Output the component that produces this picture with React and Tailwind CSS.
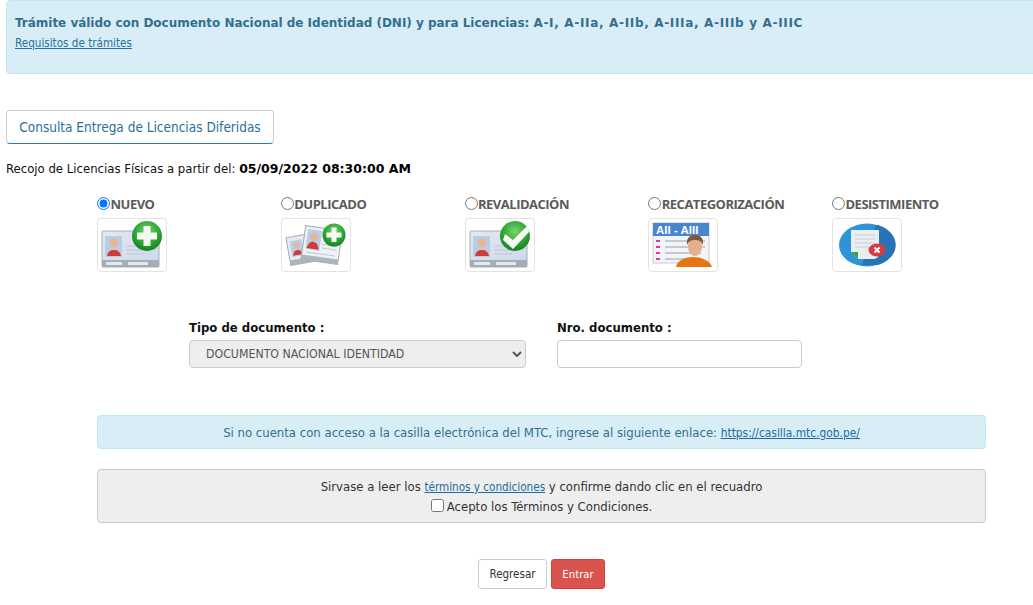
const tahoma = "font-['DejaVu_Sans_Condensed','Noto_Sans',sans-serif]";

function Defs() {
  return (
    <defs>
      <radialGradient id="greenBall" cx="50%" cy="35%" r="70%">
        <stop offset="0%" stopColor="#7ed36f" />
        <stop offset="55%" stopColor="#2fa836" />
        <stop offset="100%" stopColor="#0d7a1f" />
      </radialGradient>
      <linearGradient id="cardFace" x1="0" y1="0" x2="1" y2="1">
        <stop offset="0%" stopColor="#e4e9ef" />
        <stop offset="100%" stopColor="#c9d8ec" />
      </linearGradient>
    </defs>
  );
}

function CardBase() {
  return (
    <>
      <Defs />
      <rect x="5" y="13" width="57" height="36" rx="1" fill="url(#cardFace)" stroke="#a9afb6" />
      <rect x="8" y="18" width="17" height="21" fill="#b9cde6" />
      <circle cx="17" cy="25" r="4.500" fill="#e5b59a" />
      <path d="M10 38c1-5 4-6 7-6s6 1 7 6z" fill="#d23a36" />
      <path d="M29 28h20M29 32h24M29 36h18" stroke="#bcc6d2" strokeWidth="1" />
      <path d="M5 42h57v7H5z" fill="#a4acb5" />
      <path d="M9 44h16v3H9zM31 44h20v3H31z" fill="#e6e9ec" />
    </>
  );
}

const iconCls = "w-[68px] h-[52px]";

function Nuevo() {
  return (
    <svg viewBox="1 1 68 52" className={iconCls}>
      <CardBase />
      <circle cx="50" cy="18" r="15" fill="url(#greenBall)" />
      <path d="M46.500 8h7v6.500H60v7h-6.500V28h-7v-6.500H40v-7h6.500z" fill="#f4f9f2" />
    </svg>
  );
}

function Duplicado() {
  return (
    <svg viewBox="1 1 68 52" className={iconCls}>
      <Defs />
      <g transform="rotate(-10 22 30)">
        <rect x="7" y="17" width="28" height="28" fill="#e8ecf1" stroke="#a5abb2" />
        <rect x="10" y="21" width="12" height="16" fill="#b9cde6" />
        <circle cx="16" cy="26" r="3" fill="#e5b59a" />
        <path d="M11 36c1-4 3-5 5-5s4 1 5 5z" fill="#d23a36" />
        <path d="M7 40h28v5H7z" fill="#aeb5bd" />
      </g>
      <g transform="rotate(8 40 28)">
        <rect x="22" y="10" width="37" height="34" fill="#eef2f7" stroke="#a5abb2" />
        <rect x="25" y="13" width="14" height="20" fill="#b9cde6" />
        <circle cx="32" cy="20" r="4" fill="#e5b59a" />
        <path d="M26 32c1-5 3-7 6-7s5 2 6 7z" fill="#d23a36" />
        <path d="M41 26h14M41 30h15M26 36h29" stroke="#bcc6d2" />
        <path d="M22 39h37v5H22z" fill="#aeb5bd" />
      </g>
      <circle cx="53" cy="17" r="11.500" fill="url(#greenBall)" />
      <path d="M50.500 9.500h5V14.500H60.500v5H55.500v4.500h-5v-4.500H45.500v-5h5z" fill="#f4f9f2" />
    </svg>
  );
}

function Revalidacion() {
  return (
    <svg viewBox="1 1 68 52" className={iconCls}>
      <CardBase />
      <circle cx="50" cy="18" r="15" fill="url(#greenBall)" />
      <path d="M40 16l8 6 15-15 1 7-16 17-10-9z" fill="#f4f9f2" />
    </svg>
  );
}

function Recategorizacion() {
  return (
    <svg viewBox="1 1 68 52" className={iconCls}>
      <rect x="5" y="5" width="56" height="40" fill="#f2f4f8" stroke="#c5cbd4" />
      <rect x="5" y="5" width="56" height="13" fill="#4a86d0" />
      <text x="8" y="16" fontSize="11.500" fontWeight="700" fill="#ffffff" fontFamily="'Liberation Sans',sans-serif">AII - AIII</text>
      <path d="M8 23h4M8 29h4M8 35h4M8 41h4" stroke="#d93ab0" strokeWidth="2" />
      <path d="M17 23h40M17 29h40M17 35h36M17 41h26" stroke="#b5bcc6" strokeWidth="1.500" />
      <path d="M28 49c1-7 10-10 17-10s17 3 19 10z" fill="#e77412" />
      <ellipse cx="47" cy="29" rx="7" ry="9" fill="#e3b08c" />
      <path d="M39 27c-1-8 4-10 8-10s9 2 8 10c-2-4-4-5-8-5s-6 1-8 5z" fill="#7d5a3c" />
    </svg>
  );
}

function Desistimiento() {
  return (
    <svg viewBox="1 1 68 52" className={iconCls}>
      <ellipse cx="35" cy="27" rx="28" ry="21.500" fill="#2f93da" />
      <path d="M46 7a28 21.500 0 0 1 0 40H30L44 7z" fill="#2773b6" />
      <path d="M19 12h28v24a5 5 0 0 1-5 5H26l-7-7z" fill="#e9eef3" />
      <path d="M19 34h7v7z" fill="#37a24a" />
      <path d="M23 17h20M23 21h20M23 25h20M23 29h14" stroke="#c6ced6" />
      <ellipse cx="45" cy="32" rx="8.500" ry="6.500" fill="#d83a3e" />
      <path d="M42.500 29.500l5 5M47.500 29.500l-5 5" stroke="#fff" strokeWidth="2" />
    </svg>
  );
}

function Option({ label, Icon, checked }) {
  return (
    <div className="w-[183.75px] shrink-0">
      <label className="flex items-start h-[22px] text-[13px] leading-[17px] font-bold text-[#5a5a5a] font-['Open_Sans',sans-serif] tracking-[-0.5px]">
        <input type="radio" name="tipo" defaultChecked={checked} className="w-[13px] h-[13px] m-0 mt-[1px]" />
        <span className="ml-[0.5px]">{label}</span>
      </label>
      <div className="w-[70px] h-[54px] border border-[#e3e3e3] rounded-[4px] bg-white overflow-hidden">
        <Icon />
      </div>
    </div>
  );
}

export default function App() {
  return (
    <div className={`w-[1033px] h-[605px] overflow-hidden bg-white text-[12px] text-[#333] ${tahoma}`}>
      <div className="ml-[6px] w-[1040px] h-[74px] bg-[#d9edf7] border border-[#bce8f1] rounded-[4px] pl-[8px] pt-[14px]">
        <p className="text-[12px] leading-[16px] font-bold text-[#31708f] font-['DejaVu_Sans',sans-serif] tracking-[-0.02px] m-0">
          Trámite válido con Documento Nacional de Identidad (DNI) y para Licencias: <span className="tracking-[0.67px]">A-I, A-IIa, A-IIb, A-IIIa, A-IIIb y A-IIIC</span>
        </p>
        <a href="#" className="block mt-[4px] text-[11.600px] leading-[16px] text-[#23749f] underline w-fit">Requisitos de trámites</a>
      </div>

      <div className="mt-[36px] pl-[6px]">
        <button className="h-[34px] w-[268px] border border-[#ccc] border-b-[#2e7ca8] rounded-[4px] bg-white text-[13.500px] text-[#2a7099]">
          Consulta Entrega de Licencias Diferidas
        </button>
      </div>

      <p className="mt-[16px] ml-[6px] mb-0 text-[13px] leading-[18px] text-[#111]">
        Recojo de Licencias Físicas a partir del: <b className="font-['DejaVu_Sans',sans-serif] text-[12.500px] text-black">05/09/2022 08:30:00 AM</b>
      </p>

      <div className="flex ml-[97px] mt-[18px]">
        <Option label="NUEVO" Icon={Nuevo} checked />
        <Option label="DUPLICADO" Icon={Duplicado} />
        <Option label="REVALIDACIÓN" Icon={Revalidacion} />
        <Option label="RECATEGORIZACIÓN" Icon={Recategorizacion} />
        <Option label="DESISTIMIENTO" Icon={Desistimiento} />
      </div>

      <div className="flex ml-[189px] mt-[47px] gap-[31px]">
        <div className="w-[337px]">
          <div className="h-[21px] text-[13px] leading-[18px] font-bold text-[#111]">Tipo de documento :</div>
          <div className="relative h-[28px] bg-[#eee] border border-[#ccc] rounded-[4px] pl-[16px] text-[12.250px] leading-[26px] text-[#555]">
            DOCUMENTO NACIONAL IDENTIDAD
            <svg viewBox="0 0 10 6" className="absolute right-[3px] top-[10px] w-[10px] h-[6px]" fill="none" stroke="#555" strokeWidth="2">
              <path d="M1 1l4 4 4-4" />
            </svg>
          </div>
        </div>
        <div className="w-[245px]">
          <div className="h-[21px] text-[13px] leading-[18px] font-bold text-[#111]">Nro. documento :</div>
          <input className="block w-full h-[28px] bg-white border border-[#ccc] rounded-[4px]" />
        </div>
      </div>

      <div className="ml-[97px] w-[889px] mt-[47px] h-[34px] bg-[#d9edf7] border border-[#bce8f1] rounded-[4px] text-center text-[13px] leading-[33px] text-[#31708f]">
        Si no cuenta con acceso a la casilla electrónica del MTC, ingrese al siguiente enlace: <a href="#" className="text-[11.850px] text-[#1b6d9c] underline">https://casilla.mtc.gob.pe/</a>
      </div>

      <div className="ml-[97px] w-[889px] mt-[20px] h-[54px] bg-[#eee] border border-[#ccc] rounded-[4px] text-center pt-[7px] text-[13px] text-[#333] leading-[20px]">
        <div>Sirvase a leer los <a href="#" className="text-[11.600px] text-[#1b6d9c] underline">términos y condiciones</a> y confirme dando clic en el recuadro</div>
        <label className="flex items-center justify-center gap-[3px] text-[13px]">
          <input type="checkbox" className="w-[13px] h-[13px] m-0 -mt-[3px]" />
          <span>Acepto los Términos y Condiciones.</span>
        </label>
      </div>

      <div className="flex justify-center gap-[4px] mt-[36px] ml-[50px]">
        <button className="w-[69px] h-[30px] pt-[2px] bg-white border border-[#ccc] rounded-[3px] text-[11.500px] text-[#333]">Regresar</button>
        <button className="w-[54px] h-[30px] pt-[2px] bg-[#d9534f] border border-[#d43f3a] rounded-[3px] text-[11.300px] font-medium text-white">Entrar</button>
      </div>
    </div>
  );
}
